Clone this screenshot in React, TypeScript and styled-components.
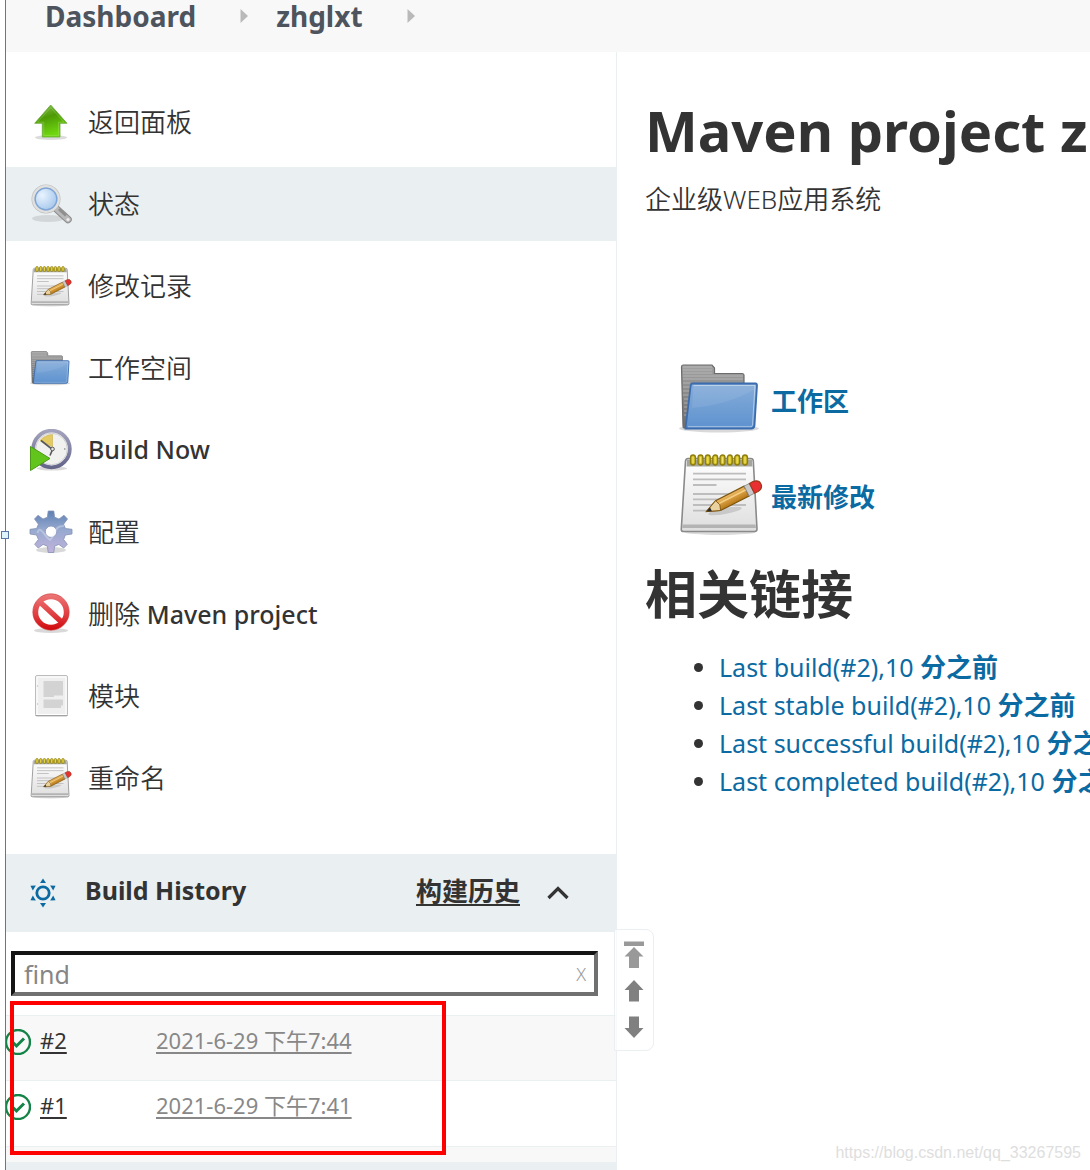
import React, { ReactNode, useState } from "react";
import styled, { createGlobalStyle } from "styled-components";

const c = {
  text: "#333333",
  crumb: "#4d545d",
  link: "#0b6aa2",
  band: "#eaeff2",
  soft: "#f8f8f8",
  muted: "#888888",
  frame: "#5a78a3",
};

const GlobalStyle = createGlobalStyle`
  *, *::before, *::after { box-sizing: border-box; }
  body {
    margin: 0;
    background: #fff;
    color: ${c.text};
    font-family: "Noto Sans", "Noto Sans CJK SC", sans-serif;
    font-size: 25px;
  }
  svg { display: block; flex: none; }
`;

/* ---------- icons ---------- */

const Notepad = ({ size }: { size: number }) => (
  <svg width={size} height={size} viewBox="0 0 84 84" aria-hidden="true">
    <defs>
      <linearGradient id="paper" x1="0" y1="0" x2="0" y2="1">
        <stop offset="0" stopColor="#ffffff" />
        <stop offset="1" stopColor="#dedede" />
      </linearGradient>
      <linearGradient id="wood" x1="0" y1="0" x2="0" y2="1">
        <stop offset="0" stopColor="#edba62" />
        <stop offset="1" stopColor="#b87816" />
      </linearGradient>
    </defs>
    <ellipse cx="41" cy="80" rx="36" ry="3" fill="#000" opacity="0.14" />
    <path d="M9 6.5H72Q74 6.5 74.300 9L78 77Q78 79.500 75.500 79.500H4.500Q2 79.500 2.300 77L6.500 9Q7 6.500 9 6.500Z" fill="url(#paper)" stroke="#8a8a8a" strokeWidth="1.600" />
    <path d="M8 7.500H73L73.500 14.500H7.500Z" fill="#a5a59b" />
    <path d="M3.500 72.500H76.500L77 76H3.300Z" fill="#b3b3b3" />
    {[14, 21.5, 28.8, 36.2, 43.5, 50.8, 58.2, 66].map((x) => (
      <g key={x}>
        <rect x={x - 2.4} y="3" width="4.800" height="10" rx="2.400" fill="#d6c42a" stroke="#8f7d0c" strokeWidth="1.400" />
        <path d={`M${x} 5V11`} stroke="#f0e36a" strokeWidth="1" />
      </g>
    ))}
    <path d="M14 21.700H67M14 27.300H67M14 33H37.500M14 42H67M14 47.300H50M14 53H67M14 58.700H31" stroke="#bdbdbd" strokeWidth="1.800" />
    <ellipse cx="46" cy="59" rx="17" ry="3" fill="#000" opacity="0.13" transform="rotate(-10 46 59)" />
    <g transform="translate(27.500 59.500) rotate(-27)">
      <path d="M0 0L13 -5.500H45V5.500H13Z" fill="url(#wood)" stroke="#7c5510" strokeWidth="1.200" />
      <path d="M0 0L13 -5.500L15 0L13 5.500Z" fill="#ead2a0" stroke="#7c5510" strokeWidth="0.800" />
      <path d="M0 0L5 -2.200V2.200Z" fill="#2b2b2b" />
      <path d="M15 -1.500H45" stroke="#f5cf86" strokeWidth="1.500" />
      <rect x="45" y="-5.500" width="6" height="11" fill="#c9c9c9" stroke="#8a8a8a" strokeWidth="0.800" />
      <path d="M51 -5.500H55Q61 -5 61 0Q61 5 55 5.500H51Z" fill="#ea2f33" stroke="#9d3a1a" strokeWidth="1.200" />
    </g>
  </svg>
);

const Folder = ({ size }: { size: number }) => (
  <svg width={size} height={size} viewBox="0 0 84 84" aria-hidden="true">
    <defs>
      <linearGradient id="back" x1="0" y1="0" x2="0" y2="1">
        <stop offset="0" stopColor="#a2a2a2" />
        <stop offset="1" stopColor="#6c6c6c" />
      </linearGradient>
      <linearGradient id="front" x1="0" y1="0" x2="0" y2="1">
        <stop offset="0" stopColor="#86add9" />
        <stop offset="1" stopColor="#5e92cf" />
      </linearGradient>
    </defs>
    <ellipse cx="40" cy="72.500" rx="40" ry="4" fill="#000" opacity="0.15" />
    <path d="M4 9H33L35.500 12V17.500H63Q65 17.500 65 19.500V60L20 72H5Q4 72 4 70L2.500 11Q2.500 9 4 9Z" fill="url(#back)" stroke="#6b6b6b" strokeWidth="1.200" />
    <path d="M4 11H33M4 14H33M4 17H33M4 20H64M4 23H64M4 27H11M4 31H11M4 35H11M4 39H11M5 43H10M5 47H10M5 51H10M5 55H9M5 59H8" stroke="#c0c0c0" strokeWidth="0.700" />
    <path d="M13.500 27.500H76.500Q78 27.500 78 29.500L75.500 69.500Q75 72.500 72.500 72.500H6.500L11.700 29.500Q12 27.500 13.500 27.500Z" fill="url(#front)" stroke="#3b6cae" strokeWidth="1.800" />
    <path d="M14.500 29.500H76L73.500 69Q73 70.700 72 70.700H9" fill="none" stroke="#fff" strokeWidth="1" opacity="0.450" />
    <path d="M13 52C35 50 58 44 76 33V29.500H14.500Z" fill="#fff" opacity="0.080" />
  </svg>
);

const UpArrow = () => (
  <svg width="42" height="42" viewBox="0 0 42 42" aria-hidden="true">
    <defs>
      <linearGradient id="leaf" x1="0" y1="0" x2="0.300" y2="1">
        <stop offset="0" stopColor="#8dc05a" />
        <stop offset="0.450" stopColor="#4e9a06" />
        <stop offset="1" stopColor="#6fd80f" />
      </linearGradient>
    </defs>
    <ellipse cx="21" cy="36.500" rx="16" ry="2.500" fill="#000" opacity="0.140" />
    <path d="M20.700 4L37 22.300H30V36H12.300V22.300H4.700Z" fill="url(#leaf)" stroke="#6aa838" strokeWidth="0.800" strokeLinejoin="round" />
    <path d="M20.700 6.500L34 21.200H28.500V34.500H13.800V21.200H7.500Z" fill="none" stroke="#b5e67c" strokeWidth="0.800" opacity="0.400" />
  </svg>
);

const Magnifier = () => (
  <svg width="42" height="42" viewBox="0 0 42 42" aria-hidden="true">
    <defs>
      <radialGradient id="lens" cx="0.350" cy="0.350" r="0.750">
        <stop offset="0" stopColor="#e9f4ff" />
        <stop offset="1" stopColor="#9cc0e8" />
      </radialGradient>
    </defs>
    <ellipse cx="18" cy="35.500" rx="16" ry="3.500" fill="#000" opacity="0.100" />
    <path d="M26 25.500L38 36.500" stroke="#8c8c8c" strokeWidth="7.500" strokeLinecap="round" />
    <path d="M26 25.500L38 36.500" stroke="#b9b9b9" strokeWidth="5.500" strokeLinecap="round" />
    <path d="M29 26L36 32.500" stroke="#8f8f8f" strokeWidth="3" />
    <circle cx="38" cy="36.500" r="1.600" fill="#eee" />
    <circle cx="16" cy="16" r="12.500" fill="url(#lens)" stroke="#bdbdbd" strokeWidth="4" />
    <circle cx="16" cy="16" r="12.700" fill="none" stroke="#e0e0e0" strokeWidth="2.400" />
    <circle cx="16" cy="16" r="10.800" fill="none" stroke="#7ba5da" strokeWidth="1.300" />
  </svg>
);

const BuildClock = () => (
  <svg width="42" height="42" viewBox="0 0 42 42" aria-hidden="true">
    <defs>
      <linearGradient id="rim" x1="0" y1="0" x2="0" y2="1">
        <stop offset="0" stopColor="#a3a3bd" />
        <stop offset="1" stopColor="#65658a" />
      </linearGradient>
    </defs>
    <ellipse cx="22" cy="39.500" rx="15" ry="2" fill="#000" opacity="0.150" />
    <circle cx="21.500" cy="20" r="18.300" fill="#f1f1ef" stroke="url(#rim)" strokeWidth="3.800" />
    <circle cx="21.500" cy="20" r="15.800" fill="none" stroke="#cfcfd4" strokeWidth="1" />
    <path d="M10 11.500Q15 6 22.500 5.500V18Z" fill="#e4ca62" stroke="#c9b04d" strokeWidth="0.600" />
    <path d="M11 11.500L22.500 20.500L20 26.500" fill="none" stroke="#55575a" strokeWidth="1.600" />
    <circle cx="22.500" cy="20" r="1.800" fill="#e8e8e8" stroke="#555" strokeWidth="1" />
    <path d="M34 20H35.500" stroke="#999" strokeWidth="1.400" />
    <path d="M0.500 17.500L20 29.500L0.500 41.500Z" fill="#62c51b" stroke="#4c9a16" strokeWidth="1" />
  </svg>
);

const Gear = () => (
  <svg width="42" height="42" viewBox="0 0 42 42" aria-hidden="true" overflow="visible">
    <defs>
      <linearGradient id="steel" gradientUnits="userSpaceOnUse" x1="21" y1="0" x2="21" y2="42">
        <stop offset="0" stopColor="#5e80b2" />
        <stop offset="0.450" stopColor="#97a9d0" />
        <stop offset="1" stopColor="#c2b3dc" />
      </linearGradient>
    </defs>
    <ellipse cx="21" cy="39" rx="15" ry="3" fill="#000" opacity="0.150" />
    <path
      d="M18.200 0H23.800L24.600 6.200L29 8L34 4.300L37.500 8L33.600 13.200L35.400 17.500L42 18.300V23L35.400 24L33.600 28.500L37.300 33.300L33.700 37L28.800 33.400L24.600 35.200L23.800 41.500H18.200L17.400 35.200L13.100 33.400L8.200 37L4.700 33.300L8.400 28.500L6.600 24L0 23V18.300L6.600 17.500L8.400 13.200L4.500 8L8 4.300L13 8L17.400 6.200ZM21 15A5.700 5.700 0 1 0 21 26.400A5.700 5.700 0 1 0 21 15Z"
      fill="url(#steel)"
      fillRule="evenodd"
      stroke="#8492b4"
      strokeWidth="0.800"
      strokeLinejoin="round"
    />
    <path d="M7.500 22C10 13 14 25 20 29C26 24 24 14 34 15" stroke="#eef0fa" strokeWidth="2" fill="none" opacity="0.350" />
  </svg>
);

const Forbidden = () => (
  <svg width="42" height="42" viewBox="0 0 42 42" aria-hidden="true">
    <defs>
      <linearGradient id="stop" gradientUnits="userSpaceOnUse" x1="21" y1="0" x2="21" y2="38">
        <stop offset="0" stopColor="#ee7b7b" />
        <stop offset="0.600" stopColor="#df3a3d" />
        <stop offset="1" stopColor="#cf0408" />
      </linearGradient>
    </defs>
    <ellipse cx="21" cy="37.500" rx="17" ry="2.500" fill="#000" opacity="0.150" />
    <circle cx="21" cy="19" r="15.500" fill="#fff" stroke="url(#stop)" strokeWidth="5.400" />
    <path d="M10.500 9.500L31.500 29" stroke="url(#stop)" strokeWidth="5.400" />
    <circle cx="21" cy="19" r="18.200" fill="none" stroke="#cf3a3d" strokeWidth="0.600" />
  </svg>
);

const ModuleSheet = () => (
  <svg width="42" height="42" viewBox="0 0 42 42" aria-hidden="true">
    <rect x="5.500" y="0.500" width="32" height="40.500" rx="1.500" fill="#efefef" stroke="#bcbcbc" />
    <rect x="7" y="2" width="29" height="37.500" fill="none" stroke="#fff" />
    <path d="M5.500 40.500H37.500" stroke="#a3a3a3" strokeWidth="1.200" />
    <path d="M13.500 6H33V20.500H24V22H13.500ZM13.500 24.500H33V30.500H31V33H13.500Z" fill="#d3d3d3" />
    <path d="M7.500 10V12M7.500 28V30" stroke="#d4d4d4" strokeWidth="1.200" />
  </svg>
);

const SunIcon = () => (
  <svg width="30" height="30" viewBox="-15 -15 30 30" aria-hidden="true">
    <circle r="6.200" fill="none" stroke={c.link} strokeWidth="2.800" />
    {[0, 60, 120, 180, 240, 300].map((a) => (
      <path key={a} d="M0 -14.500L3 -10H-3Z" fill={c.link} transform={`rotate(${a})`} />
    ))}
  </svg>
);

const Chevron = () => (
  <svg width="24" height="24" viewBox="0 0 24 24" aria-hidden="true">
    <path d="M2.500 17L12 7.500L21.500 17" fill="none" stroke="#333" strokeWidth="3.200" />
  </svg>
);

const Success = () => (
  <svg width="26" height="26" viewBox="0 0 26 26" aria-hidden="true">
    <circle cx="13" cy="13" r="12" fill="none" stroke="#138347" strokeWidth="2.400" />
    <path d="M7.500 13L11.500 17L19 9.500" fill="none" stroke="#138347" strokeWidth="3" />
  </svg>
);

const CrumbArrow = () => (
  <svg width="8" height="14" viewBox="0 0 8 14" aria-hidden="true">
    <path d="M0.500 0L8 7L0.500 14Z" fill="#b9b9b9" />
  </svg>
);

const PagerIcon = ({ kind }: { kind: "top" | "up" | "down" }) => (
  <svg width="22" height="28" viewBox="0 0 22 28" aria-hidden="true">
    {kind === "top" && <path d="M1 0.500H21V5H1ZM11 6L20.500 15.500H16V27H6V15.500H1.500Z" fill="#999" />}
    {kind === "up" && <path d="M11 3L20.500 13H16V24.500H6V13H1.500Z" fill="#808080" />}
    {kind === "down" && <path d="M11 25L20.500 15H16V3.500H6V15H1.500Z" fill="#808080" />}
  </svg>
);

/* ---------- layout ---------- */

const Frame = styled.div`
  position: relative;
  display: flex;
  flex-direction: column;
  height: 100vh;
  margin-left: 5px;
  border-left: 1px solid ${c.frame};
`;

const FrameHandle = styled.span`
  position: absolute;
  left: -5px;
  top: 531px;
  width: 8px;
  height: 8px;
  border: 1px solid ${c.frame};
  background: #dff4fb;
`;

const Clip = styled.div`
  display: flex;
  flex: 1;
  flex-direction: column;
  min-height: 0;
  overflow: hidden;
`;

const Breadcrumbs = styled.nav`
  display: flex;
  flex: none;
  align-items: center;
  gap: 44px;
  height: 52px;
  padding: 0 39px 20px;
  background: ${c.soft};
`;

const Crumb = styled.a`
  color: ${c.crumb};
  font-size: 28px;
  font-weight: 700;
  line-height: 32px;
  text-decoration: none;
`;

const CrumbGroup = styled.span`
  display: flex;
  align-items: center;
  gap: 28px;
`;

const Columns = styled.div`
  display: grid;
  flex: 1;
  grid-template-columns: 611px minmax(0, 1fr);
  min-height: 0;
`;

const Sidebar = styled.aside`
  border-right: 1px solid ${c.band};
`;

const TaskList = styled.ul`
  display: grid;
  gap: 8px;
  margin: 0;
  padding: 33px 0 39px;
  list-style: none;
`;

const Task = styled.a<{ $active?: boolean }>`
  display: flex;
  align-items: center;
  gap: 16px;
  height: 74px;
  padding: 0 24px;
  background: ${(p) => (p.$active ? c.band : "transparent")};
  color: ${c.text};
  font-size: 26px;
  font-weight: 350;
  text-decoration: none;
`;

const TaskLabel = styled.span`
  padding-bottom: 2px;
`;

const Latin = styled.span`
  font-size: 25px;
  font-weight: 500;
`;

const HistoryHead = styled.header`
  display: flex;
  align-items: center;
  height: 78px;
  padding: 0 46px 0 22px;
  background: ${c.band};
`;

const HistoryTitle = styled.h2`
  flex: 1;
  margin: 0;
  padding: 0 0 6px 27px;
  font-size: 25px;
  font-weight: 700;
`;

const TrendLink = styled.a`
  margin-right: 26px;
  padding-bottom: 6px;
  color: ${c.text};
  font-size: 26px;
  font-weight: 700;
  text-underline-offset: 3px;
`;

const IconButton = styled.button`
  display: block;
  padding: 0;
  border: 0;
  background: none;
  color: #999;
  font: inherit;
  cursor: pointer;
`;

const Search = styled.div`
  display: flex;
  align-items: center;
  height: 45px;
  margin: 19px 18px 19px 5px;
  padding: 0 8px 0 9px;
  border: 4px solid;
  border-color: #141414 #707070 #707070 #141414;
`;

const SearchInput = styled.input`
  flex: 1;
  min-width: 0;
  padding: 0;
  border: 0;
  outline: 0;
  background: none;
  font: 400 25px "Noto Sans", sans-serif;

  &::placeholder {
    color: #868686;
    opacity: 1;
  }
`;

const Clear = styled(IconButton)`
  font-size: 18px;
  font-weight: 300;
  line-height: 24px;
`;

const BuildTable = styled.table`
  width: 100%;
  border-collapse: collapse;
  table-layout: fixed;
`;

const BuildRow = styled.tr`
  height: 65px;
  border-top: 1px solid ${c.band};

  &:nth-child(odd) {
    background: ${c.soft};
  }
`;

const BuildCell = styled.td<{ $width?: number }>`
  width: ${(p) => (p.$width ? `${p.$width}px` : "auto")};
  padding: 0 0 16px;
  font-size: 22px;
  line-height: 30px;
`;

const BuildName = styled.div`
  display: flex;
  align-items: center;
  gap: 9px;
  margin-left: -1px;

  svg {
    margin-top: 4px;
  }
`;

const BuildLink = styled.a<{ $muted?: boolean }>`
  color: ${(p) => (p.$muted ? c.muted : c.text)};
  text-underline-offset: 3px;
`;

const TableEnd = styled.div`
  height: 16px;
  border-top: 1px solid ${c.band};
  background: ${c.soft};
`;

const Feed = styled.footer`
  height: 40px;
  background: ${c.band};
`;

const History = styled.section`
  position: relative;
`;

const Highlight = styled.div`
  position: absolute;
  top: 147px;
  left: 4px;
  width: 436px;
  height: 154px;
  border: 4px solid #ff0000;
  pointer-events: none;
`;

const Pager = styled.div`
  position: absolute;
  top: 75px;
  left: 608px;
  display: grid;
  justify-items: center;
  gap: 8px;
  padding: 11px 8px 9px;
  border: 1px solid ${c.band};
  border-radius: 0 8px 8px 0;
  background: rgba(255, 255, 255, 0.6);
`;

const Main = styled.main`
  min-width: 0;
  padding: 46px 0 0 28px;
  white-space: nowrap;
`;

const Title = styled.h1`
  margin: 0;
  font-size: 56px;
  font-weight: 700;
  line-height: 64px;
`;

const Description = styled.p`
  margin: 19px 0 0;
  font-size: 26px;
  font-weight: 350;
  line-height: 36px;
`;

const Shortcuts = styled.div`
  display: grid;
  gap: 12px;
  margin: 139px 0 24px 34px;
`;

const Shortcut = styled.a`
  display: flex;
  align-items: center;
  gap: 8px;
  color: ${c.link};
  font-size: 26px;
  font-weight: 700;
  text-decoration: none;
`;

const ShortcutLabel = styled.span`
  padding-top: 4px;
`;

const Subtitle = styled.h2`
  margin: 0;
  font-size: 52px;
  font-weight: 700;
  line-height: 68px;
`;

const LinkList = styled.ul`
  margin: 20px 0 0;
  padding-left: 74px;
`;

const LinkItem = styled.li`
  line-height: 38px;
`;

const BuildRef = styled.a`
  color: ${c.link};
  text-decoration: none;
`;

const Age = styled.strong`
  font-size: 26px;
  font-weight: 700;
`;

const Watermark = styled.small`
  position: absolute;
  right: 9px;
  bottom: 8px;
  color: #dedede;
  font: 16px "Liberation Sans", sans-serif;
`;

const tasks: { icon: ReactNode; label: ReactNode; active?: boolean }[] = [
  { icon: <UpArrow />, label: "返回面板" },
  { icon: <Magnifier />, label: "状态", active: true },
  { icon: <Notepad size={42} />, label: "修改记录" },
  { icon: <Folder size={42} />, label: "工作空间" },
  { icon: <BuildClock />, label: <Latin>Build Now</Latin> },
  { icon: <Gear />, label: "配置" },
  { icon: <Forbidden />, label: <>删除 <Latin>Maven project</Latin></> },
  { icon: <ModuleSheet />, label: "模块" },
  { icon: <Notepad size={42} />, label: "重命名" },
];

const builds = [
  { id: "#2", date: "2021-6-29 下午7:44" },
  { id: "#1", date: "2021-6-29 下午7:41" },
];

const refs = ["Last build(#2),10", "Last stable build(#2),10", "Last successful build(#2),10", "Last completed build(#2),10"];

export default function App() {
  const [query, setQuery] = useState("");

  return (
    <Frame>
      <GlobalStyle />
      <Clip>
        <Breadcrumbs>
          <CrumbGroup>
            <Crumb href="#">Dashboard</Crumb>
          </CrumbGroup>
          <CrumbGroup>
            <CrumbArrow />
            <Crumb href="#">zhglxt</Crumb>
          </CrumbGroup>
          <CrumbArrow />
        </Breadcrumbs>
        <Columns>
          <Sidebar>
            <TaskList>
              {tasks.map((t, i) => (
                <li key={i}>
                  <Task href="#" $active={t.active}>
                    {t.icon}
                    <TaskLabel>{t.label}</TaskLabel>
                  </Task>
                </li>
              ))}
            </TaskList>
            <History>
              <HistoryHead>
                <SunIcon />
                <HistoryTitle>Build History</HistoryTitle>
                <TrendLink href="#">构建历史</TrendLink>
                <IconButton aria-label="collapse">
                  <Chevron />
                </IconButton>
              </HistoryHead>
              <Search>
                <SearchInput aria-label="find" placeholder="find" value={query} onChange={(e) => setQuery(e.target.value)} />
                <Clear onClick={() => setQuery("")}>X</Clear>
              </Search>
              <BuildTable>
                <tbody>
                  {builds.map((b) => (
                    <BuildRow key={b.id}>
                      <BuildCell $width={150}>
                        <BuildName>
                          <Success />
                          <BuildLink href="#">{b.id}</BuildLink>
                        </BuildName>
                      </BuildCell>
                      <BuildCell>
                        <BuildLink href="#" $muted>{b.date}</BuildLink>
                      </BuildCell>
                    </BuildRow>
                  ))}
                </tbody>
              </BuildTable>
              <TableEnd />
              <Feed />
              <Highlight />
              <Pager>
                <IconButton aria-label="newest"><PagerIcon kind="top" /></IconButton>
                <IconButton aria-label="newer"><PagerIcon kind="up" /></IconButton>
                <IconButton aria-label="older"><PagerIcon kind="down" /></IconButton>
              </Pager>
            </History>
          </Sidebar>
          <Main>
            <Title>Maven project z</Title>
            <Description>企业级WEB应用系统</Description>
            <Shortcuts>
              <Shortcut href="#"><Folder size={84} /><ShortcutLabel>工作区</ShortcutLabel></Shortcut>
              <Shortcut href="#"><Notepad size={84} /><ShortcutLabel>最新修改</ShortcutLabel></Shortcut>
            </Shortcuts>
            <Subtitle>相关链接</Subtitle>
            <LinkList>
              {refs.map((r) => (
                <LinkItem key={r}>
                  <BuildRef href="#">{r} <Age>分之前</Age></BuildRef>
                </LinkItem>
              ))}
            </LinkList>
          </Main>
        </Columns>
      </Clip>
      <FrameHandle />
      <Watermark>https://blog.csdn.net/qq_33267595</Watermark>
    </Frame>
  );
}
